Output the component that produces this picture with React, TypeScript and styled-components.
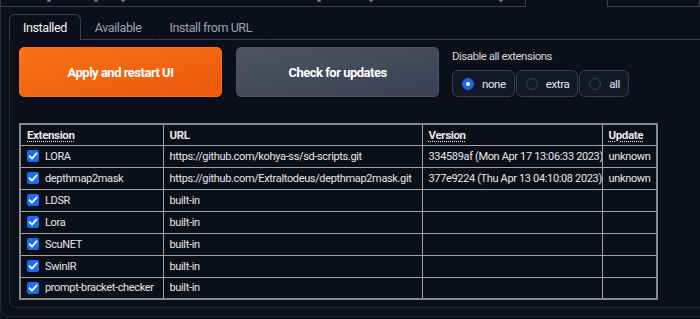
import React, { useState } from "react";
import styled, { createGlobalStyle } from "styled-components";

const BORDER = "#374151";

const GlobalStyle = createGlobalStyle`
  body {
    margin: 0;
    background: #0b0f19;
    font-family: "Roboto", "Lato", sans-serif;
    color: #e5e7eb;
  }
`;

const Page = styled.div`
  width: 700px;
  height: 319px;
  overflow: hidden;
`;

const TopStrip = styled.div`
  display: flex;
  height: 7px;
`;

const TopPanel = styled.div<{ width: number; grow?: boolean }>`
  width: ${(p) => p.width}px;
  flex: ${(p) => (p.grow ? 1 : "none")};
  height: 6px;
  border: 1px solid ${BORDER};
  border-top: none;
  margin-right: ${(p) => (p.grow ? 0 : 81)}px;
  display: flex;
  align-items: flex-start;
`;

const Dot = styled.span<{ left: number }>`
  width: 4px;
  height: 2px;
  margin-left: ${(p) => p.left}px;
  background: #6b7a90;
  border-radius: 0 0 2px 2px;
`;

const Block = styled.div`
  height: 310px;
  padding-left: 8px;
  padding-top: 7px;
  border-left: 1px solid #1f2937;
  border-bottom: 1px solid #1f2937;
  border-bottom-left-radius: 8px;
  box-sizing: border-box;
`;

const TabRow = styled.div`
  display: flex;
  height: 26px;
`;

const Tab = styled.button<{ active?: boolean }>`
  font-family: inherit;
  font-size: 12.5px;
  letter-spacing: -0.4px;
  background: ${(p) => (p.active ? "#0b0f19" : "transparent")};
  color: ${(p) => (p.active ? "#f3f4f6" : "#9ca3af")};
  border: 1px solid ${(p) => (p.active ? BORDER : "transparent")};
  border-bottom: ${(p) => (p.active ? "none" : `1px solid ${BORDER}`)};
  border-radius: 6px 6px 0 0;
  padding: 0 13px;
  height: 26px;
  margin: 0;
  box-sizing: border-box;
  cursor: pointer;
`;

const TabFill = styled.div`
  flex: 1;
  border-bottom: 1px solid ${BORDER};
`;

const TabPanel = styled.div`
  border-left: 1px solid #1f2937;
  border-bottom: 1px solid #1f2937;
  border-bottom-left-radius: 7px;
  padding: 7px 0 8px 9px;
  height: 268px;
  box-sizing: border-box;
`;

const Controls = styled.div`
  display: flex;
  align-items: flex-start;
  height: 50px;
`;

const BigButton = styled.button<{ variant: "primary" | "secondary" }>`
  width: 203px;
  height: 50px;
  border-radius: 5px;
  font-family: inherit;
  font-weight: 700;
  font-size: 13px;
  letter-spacing: -0.5px;
  color: #ffffff;
  margin-right: ${(p) => (p.variant === "primary" ? 14 : 13)}px;
  background: ${(p) =>
    p.variant === "primary"
      ? "linear-gradient(to bottom right, #f97316, #ea580c)"
      : "linear-gradient(to bottom right, #4b5563, #374151)"};
  border: 1px solid ${(p) => (p.variant === "primary" ? "#f97316" : "#4b5563")};
  cursor: pointer;
`;

const RadioBlock = styled.div`
  display: flex;
  flex-direction: column;
`;

const RadioLabel = styled.div`
  font-size: 11.5px;
  letter-spacing: -0.5px;
  color: #d1d5db;
  height: 23px;
  line-height: 18px;
`;

const RadioGroup = styled.div`
  display: flex;
  gap: 1px;
`;

const RadioItem = styled.label`
  display: flex;
  align-items: center;
  height: 27px;
  box-sizing: border-box;
  padding: 0 8px 0 9px;
  border: 1px solid ${BORDER};
  border-radius: 6px;
  background: #111827;
  font-size: 11.5px;
  letter-spacing: -0.4px;
  color: #e5e7eb;
  gap: 8px;
  cursor: pointer;
`;

const RadioDot = styled.span<{ checked: boolean }>`
  width: 12px;
  height: 12px;
  border-radius: 50%;
  box-sizing: border-box;
  background: ${(p) => (p.checked ? "#2563eb" : "#111827")};
  border: 1px solid ${(p) => (p.checked ? "#2563eb" : BORDER)};
  display: flex;
  align-items: center;
  justify-content: center;
  &::after {
    content: "";
    width: 4px;
    height: 4px;
    border-radius: 50%;
    background: #ffffff;
    display: ${(p) => (p.checked ? "block" : "none")};
  }
`;

const Table = styled.table`
  margin-top: 26px;
  border-collapse: collapse;
  table-layout: fixed;
  width: 637px;
  border: 2px solid #8a8a8a;
  font-size: 11px;
  letter-spacing: -0.35px;
  color: #e5e7eb;
`;

const Th = styled.th`
  text-align: left;
  height: 21px;
  padding: 0 6px;
  border: 1px solid #a3a3a3;
  font-weight: 700;
  font-size: 11.5px;
  box-sizing: border-box;
  white-space: nowrap;
`;

const Abbr = styled.abbr`
  text-decoration: underline dotted;
  text-underline-offset: 2px;
`;

const Td = styled.td`
  height: 22px;
  padding: 0 6px;
  border: 1px solid #a3a3a3;
  box-sizing: border-box;
  white-space: nowrap;
  overflow: hidden;
`;

const NameCell = styled.label`
  display: flex;
  align-items: center;
  gap: 6px;
`;

const Check = styled.span`
  width: 12px;
  height: 12px;
  flex: none;
  border-radius: 2px;
  background: #1a6cf0;
  display: flex;
  align-items: center;
  justify-content: center;
`;

const CheckMark = () => (
  <svg width="10" height="10" viewBox="0 0 10 10">
    <path
      d="M1.5 5.2 L4 7.6 L8.6 2.4"
      fill="none"
      stroke="#ffffff"
      strokeWidth="1.8"
      strokeLinecap="round"
      strokeLinejoin="round"
    />
  </svg>
);

const EXTENSIONS = [
  {
    name: "LORA",
    url: "https://github.com/kohya-ss/sd-scripts.git",
    version: "334589af (Mon Apr 17 13:06:33 2023)",
    update: "unknown",
  },
  {
    name: "depthmap2mask",
    url: "https://github.com/Extraltodeus/depthmap2mask.git",
    version: "377e9224 (Thu Apr 13 04:10:08 2023)",
    update: "unknown",
  },
  { name: "LDSR", url: "built-in", version: "", update: "" },
  { name: "Lora", url: "built-in", version: "", update: "" },
  { name: "ScuNET", url: "built-in", version: "", update: "" },
  { name: "SwinIR", url: "built-in", version: "", update: "" },
  { name: "prompt-bracket-checker", url: "built-in", version: "", update: "" },
];

const TABS = ["Installed", "Available", "Install from URL"];
const DISABLE = ["none", "extra", "all"];

const App = () => {
  const [tab, setTab] = useState("Installed");
  const [disable, setDisable] = useState("none");

  return (
    <Page>
      <GlobalStyle />
      <TopStrip>
        <TopPanel width={524}>
          <Dot left={46} />
          <Dot left={43} />
          <Dot left={23} />
          <Dot left={192} />
          <Dot left={48} />
          <Dot left={126} />
        </TopPanel>
        <TopPanel width={0} grow />
      </TopStrip>
      <Block>
        <TabRow>
          {TABS.map((t) => (
            <Tab key={t} active={tab === t} onClick={() => setTab(t)}>
              {t}
            </Tab>
          ))}
          <TabFill />
        </TabRow>
        <TabPanel>
          <Controls>
            <BigButton variant="primary">Apply and restart UI</BigButton>
            <BigButton variant="secondary">Check for updates</BigButton>
            <RadioBlock>
              <RadioLabel>Disable all extensions</RadioLabel>
              <RadioGroup>
                {DISABLE.map((d) => (
                  <RadioItem key={d} onClick={() => setDisable(d)}>
                    <RadioDot checked={disable === d} />
                    {d}
                  </RadioItem>
                ))}
              </RadioGroup>
            </RadioBlock>
          </Controls>
          <Table>
            <colgroup>
              <col style={{ width: 143 }} />
              <col style={{ width: 259 }} />
              <col style={{ width: 180 }} />
              <col style={{ width: 55 }} />
            </colgroup>
            <thead>
              <tr>
                <Th>
                  <Abbr>Extension</Abbr>
                </Th>
                <Th>URL</Th>
                <Th>
                  <Abbr>Version</Abbr>
                </Th>
                <Th>
                  <Abbr>Update</Abbr>
                </Th>
              </tr>
            </thead>
            <tbody>
              {EXTENSIONS.map((ext) => (
                <tr key={ext.name}>
                  <Td>
                    <NameCell>
                      <Check>
                        <CheckMark />
                      </Check>
                      {ext.name}
                    </NameCell>
                  </Td>
                  <Td>{ext.url}</Td>
                  <Td>{ext.version}</Td>
                  <Td>{ext.update}</Td>
                </tr>
              ))}
            </tbody>
          </Table>
        </TabPanel>
      </Block>
    </Page>
  );
};

export default App;
